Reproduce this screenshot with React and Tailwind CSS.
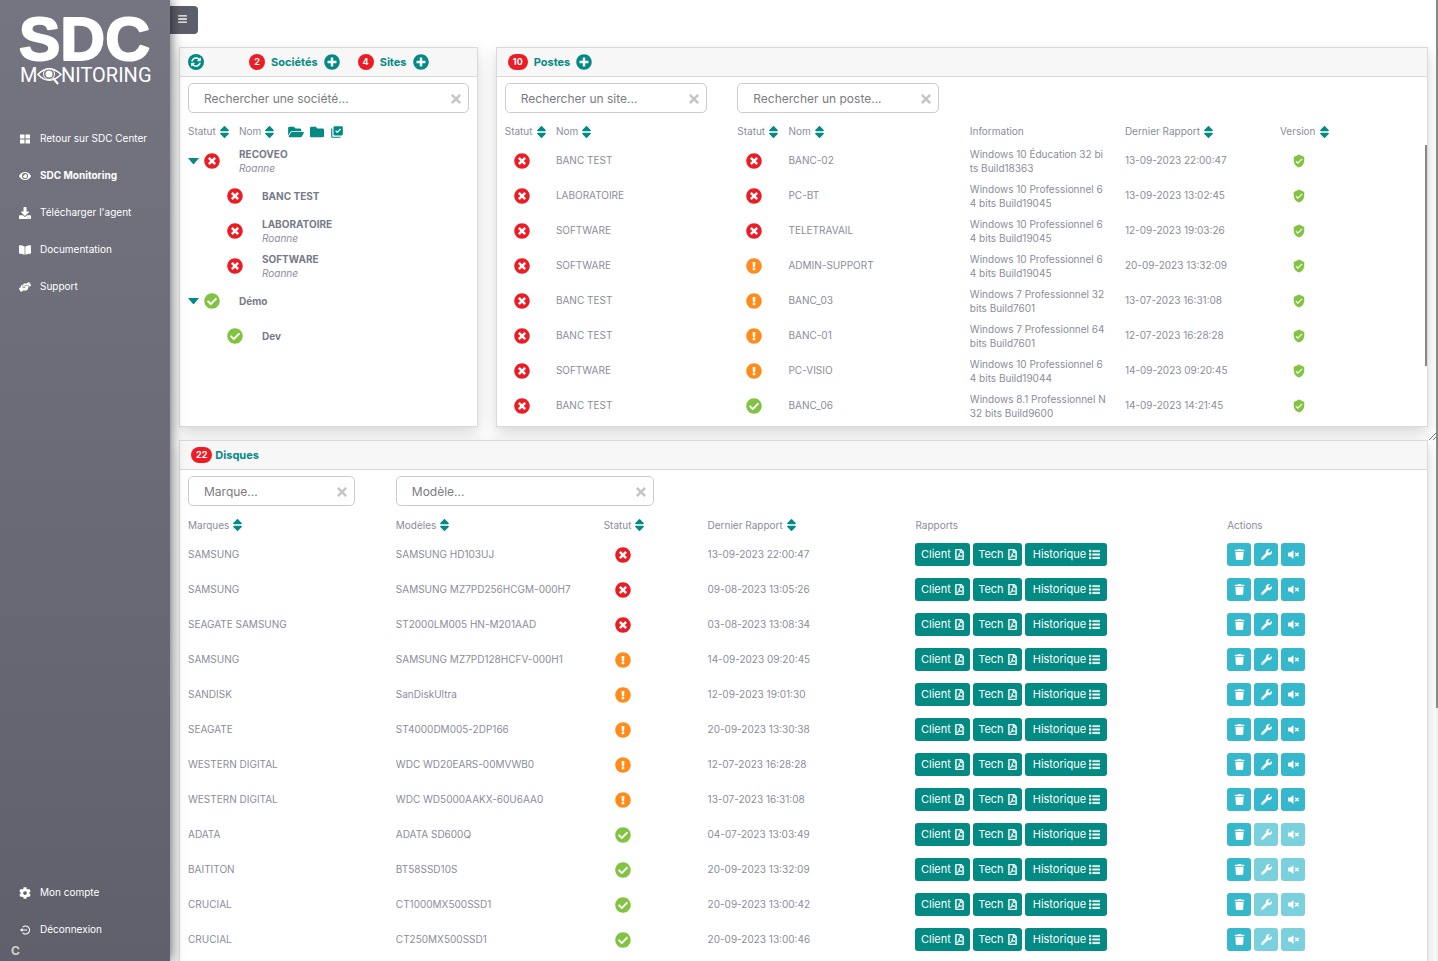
import React from 'react';
import clsx from 'clsx';
import {
  FaBars,
  FaBookOpen,
  FaCheckCircle,
  FaCog,
  FaDownload,
  FaExclamationCircle,
  FaEye,
  FaFolder,
  FaFolderOpen,
  FaHandsHelping,
  FaList,
  FaPlusCircle,
  FaRegFilePdf,
  FaSyncAlt,
  FaTimes,
  FaTimesCircle,
  FaTrash,
  FaVolumeMute,
  FaWrench,
} from 'react-icons/fa';
import { MdLibraryAddCheck, MdVerifiedUser } from 'react-icons/md';
import { BiLogOutCircle } from 'react-icons/bi';

function TilesIcon({ className }) {
  return (
    <svg viewBox="0 0 12 12" className={className} fill="currentColor">
      <path d="M1 1.500H5.500V5.500H1ZM6.500 1.500H11V5.500H6.500ZM1 6.500H5.500V10.500H1ZM6.500 6.500H11V10.500H6.500Z" />
    </svg>
  );
}

const menu = [
  { label: 'Retour sur SDC Center', icon: TilesIcon },
  { label: 'SDC Monitoring', icon: FaEye, active: true },
  { label: "Télécharger l'agent", icon: FaDownload },
  { label: 'Documentation', icon: FaBookOpen },
  { label: 'Support', icon: FaHandsHelping },
];

const accountMenu = [
  { label: 'Mon compte', icon: FaCog },
  { label: 'Déconnexion', icon: BiLogOutCircle },
];

const companies = [
  { name: 'RECOVEO', city: 'Roanne', status: 'error' },
  { name: 'BANC TEST', status: 'error', child: true },
  { name: 'LABORATOIRE', city: 'Roanne', status: 'error', child: true },
  { name: 'SOFTWARE', city: 'Roanne', status: 'error', child: true },
  { name: 'Démo', status: 'ok' },
  { name: 'Dev', status: 'ok', child: true },
];

const stations = [
  { site: 'BANC TEST', name: 'BANC-02', status: 'error', info: ['Windows 10 Éducation 32 bi', 'ts Build18363'], date: '13-09-2023 22:00:47' },
  { site: 'LABORATOIRE', name: 'PC-BT', status: 'error', info: ['Windows 10 Professionnel 6', '4 bits Build19045'], date: '13-09-2023 13:02:45' },
  { site: 'SOFTWARE', name: 'TELETRAVAIL', status: 'error', info: ['Windows 10 Professionnel 6', '4 bits Build19045'], date: '12-09-2023 19:03:26' },
  { site: 'SOFTWARE', name: 'ADMIN-SUPPORT', status: 'warning', info: ['Windows 10 Professionnel 6', '4 bits Build19045'], date: '20-09-2023 13:32:09' },
  { site: 'BANC TEST', name: 'BANC_03', status: 'warning', info: ['Windows 7 Professionnel 32', 'bits Build7601'], date: '13-07-2023 16:31:08' },
  { site: 'BANC TEST', name: 'BANC-01', status: 'warning', info: ['Windows 7 Professionnel 64', 'bits Build7601'], date: '12-07-2023 16:28:28' },
  { site: 'SOFTWARE', name: 'PC-VISIO', status: 'warning', info: ['Windows 10 Professionnel 6', '4 bits Build19044'], date: '14-09-2023 09:20:45' },
  { site: 'BANC TEST', name: 'BANC_06', status: 'ok', info: ['Windows 8.1 Professionnel N', '32 bits Build9600'], date: '14-09-2023 14:21:45' },
];

const disks = [
  { brand: 'SAMSUNG', model: 'SAMSUNG HD103UJ', status: 'error', date: '13-09-2023 22:00:47' },
  { brand: 'SAMSUNG', model: 'SAMSUNG MZ7PD256HCGM-000H7', status: 'error', date: '09-08-2023 13:05:26' },
  { brand: 'SEAGATE SAMSUNG', model: 'ST2000LM005 HN-M201AAD', status: 'error', date: '03-08-2023 13:08:34' },
  { brand: 'SAMSUNG', model: 'SAMSUNG MZ7PD128HCFV-000H1', status: 'warning', date: '14-09-2023 09:20:45' },
  { brand: 'SANDISK', model: 'SanDiskUltra', status: 'warning', date: '12-09-2023 19:01:30' },
  { brand: 'SEAGATE', model: 'ST4000DM005-2DP166', status: 'warning', date: '20-09-2023 13:30:38' },
  { brand: 'WESTERN DIGITAL', model: 'WDC WD20EARS-00MVWB0', status: 'warning', date: '12-07-2023 16:28:28' },
  { brand: 'WESTERN DIGITAL', model: 'WDC WD5000AAKX-60U6AA0', status: 'warning', date: '13-07-2023 16:31:08' },
  { brand: 'ADATA', model: 'ADATA SD600Q', status: 'ok', date: '04-07-2023 13:03:49' },
  { brand: 'BAITITON', model: 'BT58SSD10S', status: 'ok', date: '20-09-2023 13:32:09' },
  { brand: 'CRUCIAL', model: 'CT1000MX500SSD1', status: 'ok', date: '20-09-2023 13:00:42' },
  { brand: 'CRUCIAL', model: 'CT250MX500SSD1', status: 'ok', date: '20-09-2023 13:00:46' },
];

function Logo() {
  return (
    <svg viewBox="0 0 132 74" className="w-[132px] h-[74px] overflow-visible" role="img" aria-label="SDC Monitoring">
      <g fill="#fff">
        <text
          x="-1"
          y="47"
          fontFamily="'Liberation Sans', sans-serif"
          fontWeight="700"
          fontSize="62"
          stroke="#fff"
          strokeWidth="2"
          strokeLinejoin="round"
        >
          SDC
        </text>
        <text x="0" y="69" fontFamily="Roboto, sans-serif" fontSize="20">M</text>
        <text x="41" y="69" fontFamily="Roboto, sans-serif" fontSize="20">NITORING</text>
      </g>
      <g fill="none" stroke="#fff">
        <path d="M18 61.500Q29 50 41 61.500Q29 73 18 61.500Z" strokeWidth="1.500" />
        <circle cx="29" cy="61" r="5.500" strokeWidth="1" />
        <path d="M33 65L38 71" strokeWidth="2" />
      </g>
      <circle cx="29" cy="61" r="3.500" fill="#fff" />
    </svg>
  );
}

function MenuItem({ label, icon: Icon, active }) {
  return (
    <li>
      <a href="#" className={clsx('flex items-center h-[37px] pl-[19px] gap-[9px] text-white', active && 'font-bold')}>
        <Icon className="w-3 h-3 shrink-0" />
        {label}
      </a>
    </li>
  );
}

function StatusIcon({ status }) {
  if (status === 'error') return <FaTimesCircle className="w-4 h-4 text-[#ed1c24]" aria-label="Erreur" />;
  if (status === 'warning') return <FaExclamationCircle className="w-4 h-4 text-[#ff8c1a]" aria-label="Attention" />;
  return <FaCheckCircle className="w-4 h-4 text-[#82c341]" aria-label="OK" />;
}

function SortLabel({ children }) {
  return (
    <button type="button" className="flex items-center gap-1 whitespace-nowrap">
      {children}
      <svg viewBox="0 0 9 12" className="w-[9px] h-3 fill-[#028a83]">
        <path d="M4 .2Q4.500 -.2 5 .2L8.700 4Q9.200 5.200 8 5.200H1Q-.2 5.200 .3 4ZM1 6.800H8Q9.200 6.800 8.700 8L5 11.800Q4.500 12.200 4 11.800L.3 8Q-.2 6.800 1 6.800Z" />
      </svg>
    </button>
  );
}

function Search({ placeholder, className }) {
  return (
    <div className={clsx('relative', className)}>
      <input
        type="text"
        placeholder={placeholder}
        aria-label={placeholder}
        className="block w-full h-[30px] rounded-[5px] border border-[#ccc] bg-white pl-[15px] pr-7 text-[12px] text-gray-700 placeholder:text-[#7b7b80] outline-none"
      />
      <button type="button" aria-label="Effacer" className="absolute right-[7px] top-[9px] text-[#c6c6c6]">
        <FaTimes className="w-3 h-[14px]" />
      </button>
    </div>
  );
}

function Badge({ children }) {
  return (
    <span className="flex items-center justify-center h-4 min-w-4 px-[5px] rounded-full bg-[#ed1c24] text-white text-[9px] font-bold">
      {children}
    </span>
  );
}

function AddButton({ label }) {
  return (
    <button type="button" aria-label={label}>
      <FaPlusCircle className="w-4 h-4" />
    </button>
  );
}

function Card({ header, className, children }) {
  return (
    <section className={clsx('relative bg-white border border-[#d9d9d9] shadow-[0_6px_14px_rgba(0,0,0,0.16)]', className)}>
      <h2 className="flex items-center h-[29px] px-2 bg-[#f7f7f7] border-b border-[#d9d9d9] text-[11px] font-bold text-[#028a83]">
        {header}
      </h2>
      {children}
    </section>
  );
}

function ReportButton({ label, icon: Icon, className }) {
  return (
    <button
      type="button"
      className={clsx('flex items-center justify-center gap-[3px] h-[23px] rounded-[3px] bg-[#028a83] text-white text-[11px]', className)}
    >
      {label}
      <Icon className="w-[11px] h-[11px] stroke-current stroke-[20]" />
    </button>
  );
}

function ActionButton({ label, icon: Icon, disabled }) {
  return (
    <button
      type="button"
      aria-label={label}
      disabled={disabled}
      className={clsx('flex items-center justify-center w-6 h-[23px] rounded-[3px] bg-[#35b8cc] text-white', disabled && 'opacity-65')}
    >
      <Icon className="w-[11px] h-[11px]" />
    </button>
  );
}

function Companies() {
  return (
    <Card
      className="h-[380px]"
      header={
        <>
          <button type="button" aria-label="Rafraîchir" className="flex items-center justify-center w-4 h-4 rounded-full bg-[#028a83] text-white">
            <FaSyncAlt className="w-[10px] h-[10px]" />
          </button>
          <div className="flex items-center gap-[6px] ml-[45px]">
            <Badge>2</Badge>
            Sociétés
            <AddButton label="Ajouter une société" />
          </div>
          <div className="flex items-center gap-[6px] ml-[18px]">
            <Badge>4</Badge>
            Sites
            <AddButton label="Ajouter un site" />
          </div>
        </>
      }
    >
      <div className="px-2 pt-[6px]">
        <Search placeholder="Rechercher une société..." />
        <div className="flex items-center h-[37px]">
          <div className="w-[51px]"><SortLabel>Statut</SortLabel></div>
          <SortLabel>Nom</SortLabel>
          <div className="flex items-center gap-[6px] ml-[14px] text-[#028a83]">
            <button type="button" aria-label="Tout ouvrir"><FaFolderOpen className="w-4 h-[14px]" /></button>
            <button type="button" aria-label="Tout fermer"><FaFolder className="w-[14px] h-[14px]" /></button>
            <button type="button" aria-label="Tout sélectionner"><MdLibraryAddCheck className="w-[14px] h-[14px]" /></button>
          </div>
        </div>
      </div>
      <ul className="-mt-[7px]">
        {companies.map((c) => (
          <li key={c.name} className={clsx('flex items-center h-[35px]', c.child ? 'pl-[47px]' : 'pl-2')}>
            {!c.child && (
              <button type="button" aria-label={`Replier ${c.name}`} className="w-4 text-[#028a83]">
                <svg viewBox="0 0 11 6" className="w-[11px] h-[6px] fill-current"><path d="M0 0H11L6 6H5Z" /></svg>
              </button>
            )}
            <StatusIcon status={c.status} />
            <div className="ml-[19px] leading-[14px]">
              <div className="font-bold text-[#777a89]">{c.name}</div>
              {c.city && <div className="italic">{c.city}</div>}
            </div>
          </li>
        ))}
      </ul>
    </Card>
  );
}

function Stations() {
  return (
    <Card
      className="col-span-3 h-[380px]"
      header={
        <div className="flex items-center gap-[6px] ml-[3px]">
          <Badge>10</Badge>
          Postes
          <AddButton label="Ajouter un poste" />
        </div>
      }
    >
      <div className="grid grid-cols-4 pt-[6px]">
        <div className="pl-2"><Search placeholder="Rechercher un site..." className="w-[90%]" /></div>
        <div className="pl-2"><Search placeholder="Rechercher un poste..." className="w-[90%]" /></div>
      </div>
      <table className="w-full table-fixed text-left">
        <colgroup>
          <col className="w-[5.5%]" />
          <col className="w-[19.5%]" />
          <col className="w-[5.5%]" />
          <col className="w-[19.5%]" />
          <col className="w-2/12" />
          <col className="w-2/12" />
          <col className="w-2/12" />
        </colgroup>
        <thead>
          <tr className="h-[30px] *:pl-2 *:font-normal *:pt-[7px]">
            <th><SortLabel>Statut</SortLabel></th>
            <th><SortLabel>Nom</SortLabel></th>
            <th><SortLabel>Statut</SortLabel></th>
            <th><SortLabel>Nom</SortLabel></th>
            <th>Information</th>
            <th><SortLabel>Dernier Rapport</SortLabel></th>
            <th><SortLabel>Version</SortLabel></th>
          </tr>
        </thead>
        <tbody>
          {stations.map((s) => (
            <tr key={s.name} className="h-[35px] *:pl-2">
              <td><div className="pl-[9px]"><StatusIcon status="error" /></div></td>
              <td>{s.site}</td>
              <td><div className="pl-[9px]"><StatusIcon status={s.status} /></div></td>
              <td>{s.name}</td>
              <td className="leading-[14px] whitespace-nowrap">
                {s.info[0]}
                <br />
                {s.info[1]}
              </td>
              <td>{s.date}</td>
              <td><div className="pl-3"><MdVerifiedUser className="w-[14px] h-[14px] text-[#82c341]" aria-label="À jour" /></div></td>
            </tr>
          ))}
        </tbody>
      </table>
      {/* scroll thumb of the list */}
      <div className="absolute right-0 top-[97px] w-[2px] h-[221px] bg-[#888]" />
    </Card>
  );
}

function Disks() {
  return (
    <Card
      className="pb-10"
      header={
        <div className="flex items-center gap-[3px] ml-[3px]">
          <Badge>22</Badge>
          Disques
        </div>
      }
    >
      <div className="grid grid-cols-12 pt-[6px]">
        <div className="col-span-2 pl-2"><Search placeholder="Marque..." className="w-10/12" /></div>
        <div className="col-span-3 pl-2"><Search placeholder="Modèle..." className="w-[85%]" /></div>
      </div>
      <table className="w-full table-fixed text-left">
        <colgroup>
          <col className="w-2/12" />
          <col className="w-2/12" />
          <col className="w-1/12" />
          <col className="w-2/12" />
          <col className="w-3/12" />
          <col className="w-2/12" />
        </colgroup>
        <thead>
          <tr className="h-[31px] *:pl-2 *:font-normal *:pt-[7px]">
            <th><SortLabel>Marques</SortLabel></th>
            <th><SortLabel>Modèles</SortLabel></th>
            <th><SortLabel>Statut</SortLabel></th>
            <th><SortLabel>Dernier Rapport</SortLabel></th>
            <th>Rapports</th>
            <th>Actions</th>
          </tr>
        </thead>
        <tbody>
          {disks.map((d) => (
            <tr key={d.model} className="h-[35px] *:pl-2 whitespace-nowrap">
              <td>{d.brand}</td>
              <td>{d.model}</td>
              <td><div className="pl-[11px]"><StatusIcon status={d.status} /></div></td>
              <td>{d.date}</td>
              <td>
                <div className="flex gap-[3px]">
                  <ReportButton label="Client" icon={FaRegFilePdf} className="w-[55px]" />
                  <ReportButton label="Tech" icon={FaRegFilePdf} className="w-[49px]" />
                  <ReportButton label="Historique" icon={FaList} className="w-[82px]" />
                </div>
              </td>
              <td>
                <div className="flex gap-[3px]">
                  <ActionButton label="Supprimer" icon={FaTrash} />
                  <ActionButton label="Maintenance" icon={FaWrench} disabled={d.status === 'ok'} />
                  <ActionButton label="Désactiver les alertes" icon={FaVolumeMute} disabled={d.status === 'ok'} />
                </div>
              </td>
            </tr>
          ))}
        </tbody>
      </table>
    </Card>
  );
}

export default function App() {
  return (
    <div className="relative flex h-screen overflow-hidden bg-white font-[Inter,sans-serif] text-[10px] text-[#8a8d9b]">
      <aside className="relative z-10 flex flex-col w-[170px] shrink-0 bg-linear-to-b from-[#747580] to-[#5f606c] shadow-[0_0_12px_rgba(0,0,0,0.7)]">
        <div className="pl-5 pt-[13px]">
          <Logo />
        </div>
        <ul className="mt-[33px]">
          {menu.map((m) => <MenuItem key={m.label} {...m} />)}
        </ul>
        <ul className="mt-auto">
          {accountMenu.map((m) => <MenuItem key={m.label} {...m} />)}
        </ul>
        <div className="pl-[11px] h-[13px] leading-[6px] text-[12px] font-bold text-[#d4d2c8]">C</div>
      </aside>

      <main className="flex-1 min-w-0 pt-[6px]">
        <button type="button" aria-label="Menu" className="flex items-center justify-center w-7 h-7 pb-[2px] rounded-r bg-[#5d5e6b] text-white">
          <FaBars className="w-[9px] h-[10px] -ml-1" />
        </button>
        <div className="mt-[13px] pl-[9px] pr-[10px]">
          <div className="grid grid-cols-4 gap-[18px] mb-[13px]">
            <Companies />
            <Stations />
          </div>
          <Disks />
        </div>
      </main>

      {/* grip of the resizable top area */}
      <svg viewBox="0 0 7 7" className="absolute right-[2px] top-[433px] w-[7px] h-[7px] stroke-[#777] fill-none">
        <path d="M0 7L7 0M4 7L7 4" />
      </svg>
      <div className="absolute right-0 top-0 w-[2px] h-full bg-[#f1f1f1]">
        <div className="h-[708px] bg-[#888]" />
      </div>
    </div>
  );
}
